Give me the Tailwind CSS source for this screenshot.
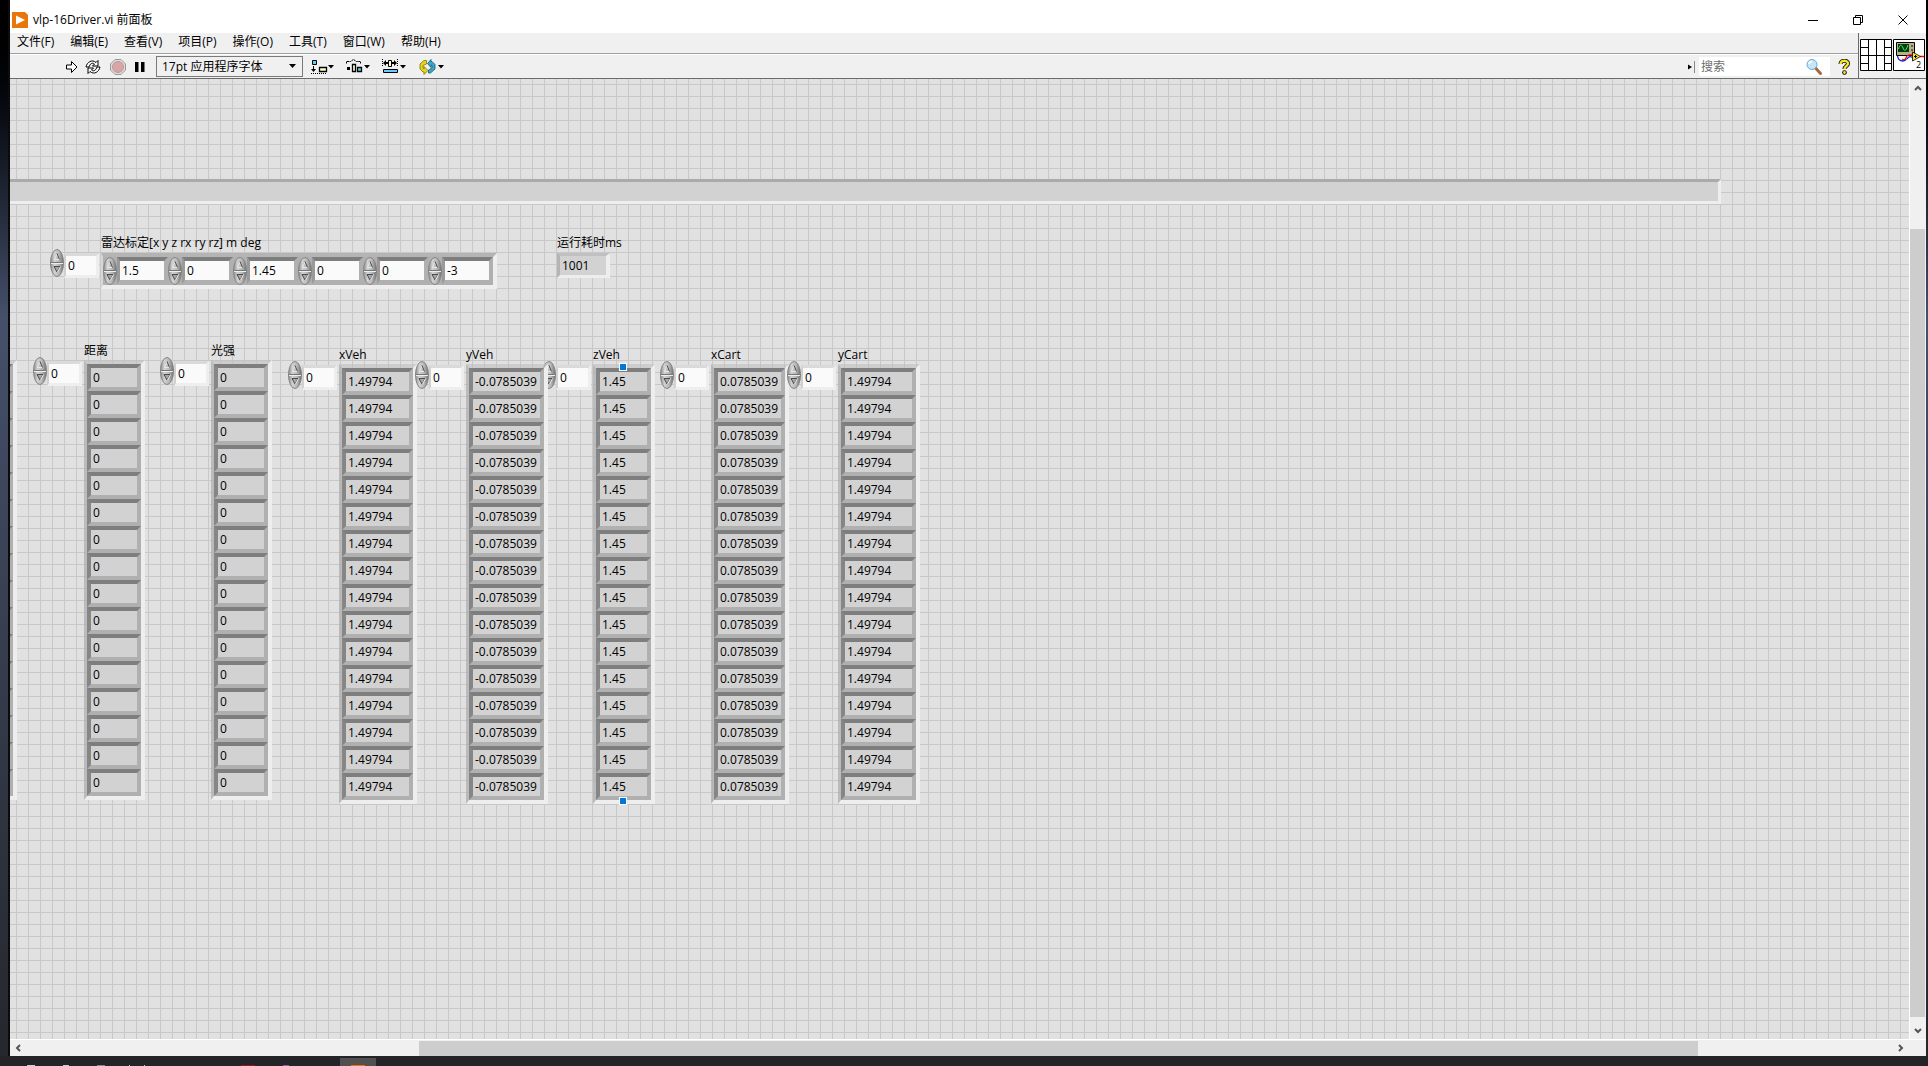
<!DOCTYPE html>
<html lang="zh-CN">
<head>
<meta charset="utf-8">
<title>vlp-16Driver.vi 前面板</title>
<script src="https://cdn.jsdelivr.net/npm/@tailwindcss/browser@4"></script>
</head>
<body class="h-screen overflow-hidden bg-[#232427] font-['Open_Sans','Noto_Sans_CJK_SC',sans-serif] text-xs leading-4 text-black">
<svg class="absolute size-0" aria-hidden="true">
  <defs>
    <linearGradient id="metal" x1="0" x2="1"><stop offset="0" stop-color="#8c8c8c"/><stop offset=".3" stop-color="#d2d2d2"/><stop offset=".65" stop-color="#b8b8b8"/><stop offset="1" stop-color="#707070"/></linearGradient>
  </defs>
</svg>
<div class="flex h-full flex-col pb-2.5">
<div class="flex min-h-0 grow bg-linear-to-b from-black via-[#45506a] via-30% to-[#25272c] pr-0.5">
<div class="flex min-w-0 grow flex-col bg-[#f0f0f0] ml-2 border-l-2 border-[#0c0c0e]">
  <header class="flex h-[33px] shrink-0 items-center bg-white pl-0.5 pt-1.5">
    <svg class="size-4" viewBox="0 0 16 16"><path d="M0 0h13l3 3v13H0z" fill="#e8760a"/><path d="M4 3.500l9 4.500-9 4.500z" fill="#fff"/></svg>
    <h1 class="ml-[5px]">vlp-16Driver.vi 前面板</h1>
    <div class="ml-auto flex items-center gap-[33px] pr-[17px]">
      <button aria-label="最小化"><svg class="size-3" viewBox="0 0 12 12"><path d="M1 6.500h10" stroke="#000"/></svg></button>
      <button aria-label="还原"><svg class="size-3" viewBox="0 0 12 12" fill="none" stroke="#000"><path d="M1.500 3.500h7v7h-7zM3.500 3.500v-2h7v7h-2"/></svg></button>
      <button aria-label="关闭"><svg class="size-3" viewBox="0 0 12 12" stroke="#000"><path d="M1.500 1.500l9 9M10.500 1.500l-9 9"/></svg></button>
    </div>
  </header>
  <div class="flex h-[46px] shrink-0 border-b border-[#6b6b6b]">
    <div class="flex min-w-0 grow flex-col">
      <nav class="flex h-[21px] shrink-0 items-center gap-4 border-b border-[#a0a0a0] pb-0.5 pl-[7px]">
        <button>文件(F)</button><button>编辑(E)</button><button>查看(V)</button><button>项目(P)</button><button>操作(O)</button><button>工具(T)</button><button>窗口(W)</button><button>帮助(H)</button>
      </nav>
      <div class="flex grow items-center border-t border-white">
        <button class="ml-[54px]" aria-label="运行"><svg class="size-4" viewBox="0 0 16 16"><path d="M2.500 6h5V2.500L13 8l-5.500 5.500V10h-5z" fill="#fff" stroke="#000"/></svg></button>
        <button class="ml-1" aria-label="连续运行"><svg class="h-4 w-[18px]" viewBox="0 0 18 16" fill="#fff" stroke="#000"><path d="M2 8C3 3 8 0 12 3.500l2-2V7H8.500l2-2C8 3 6 5 5 8z"/><path d="M16 8c-1 5-6 8-10 4.500l-2 2V9h5.500l-2 2c2.500 2 4.500 0 5.500-3z"/></svg></button>
        <button class="ml-2" aria-label="中止执行"><svg class="size-4" viewBox="0 0 16 16"><path d="M5 .5h6L15.500 5v6L11 15.500H5L.5 11V5z" fill="#ddd" stroke="#999"/><circle cx="8" cy="8" r="5.500" fill="#dba5a7" stroke="#b99"/></svg></button>
        <button class="ml-1.5" aria-label="暂停"><svg class="size-4" viewBox="0 0 16 16"><path d="M3 3h3.500v10H3zM9 3h3.500v10H9z"/></svg></button>
        <div class="relative ml-2">
          <select aria-label="字体" class="block h-[21px] w-[147px] appearance-none border border-[#7a7a7a] bg-[#f0f0f0] pl-[5px]"><option>17pt 应用程序字体</option></select>
          <svg class="pointer-events-none absolute right-[7px] top-2 h-1 w-[7px]" viewBox="0 0 7 4"><path d="M0 0h7L3.500 4z"/></svg>
        </div>
        <button class="ml-2 flex items-center" aria-label="对齐对象"><svg class="h-4 w-[23px]" viewBox="0 0 23 16"><path d="M1.500 1.500h4v4h-4z" fill="#6cf" stroke="#000"/><path d="M8.500 8.500h7v4h-7z" fill="#ffc" stroke="#000" stroke-width="1.300"/><path d="M2.500 7v4" stroke="#000"/><path d="M0 10h5l-2.500 3z"/><path d="M0 14.500h16" stroke="#000" stroke-dasharray="1 1"/><path d="M17 6h6l-3 3.500z"/></svg></button>
        <button class="ml-3" aria-label="分布对象"><svg class="h-4 w-6" viewBox="0 0 24 16"><path d="M.5 4.500v-2h4l3-2 3 2h4v2" fill="none" stroke="#000" stroke-dasharray="2 .5"/><path d="M1 8h3v3H1z"/><path d="M6.500 5.500h3v7h-3z" fill="#ffc" stroke="#000" stroke-width="1.300"/><path d="M11.500 8.500h4v4h-4z" fill="#6cf" stroke="#000" stroke-width="1.300"/><path d="M18 6h6l-3 3.500z"/></svg></button>
        <button class="ml-3" aria-label="调整对象大小"><svg class="h-4 w-6" viewBox="0 0 24 16"><path d="M.5 0v8M15.500 0v8" stroke="#000" stroke-dasharray="1 1"/><path d="M1 4l3-3v2h2v2H4v2zM15 4l-3-3v2h-2v2h2v2z"/><path d="M6.500 1.500h3v6h-3z" fill="#ffc" stroke="#000"/><path d="M1.500 10.500h14v3h-14z" fill="#6cf" stroke="#000"/><path d="M18 6h6l-3 3.500z"/></svg></button>
        <button class="ml-[13px]" aria-label="重新排序"><svg class="h-4 w-[25px]" viewBox="0 0 25 16"><path d="M7.500 1.500H5L1 5v5l3 3h1v2.500l4-4-4-4V10L4 9V6.500L7.500 5z" fill="#e2d51b" stroke="#7d7500" stroke-width=".8"/><path d="M9.500 14h2l4.500-4V5.500l-3-3h-1V.5l-3.500 4 3.500 4V6l1 .5V9l-3.500 2z" fill="#3aa9c9" stroke="#14586c" stroke-width=".8"/><path d="M19 6h6l-3 3.500z"/></svg></button>
        <svg class="ml-auto h-3 w-2" viewBox="0 0 8 12"><path d="M1 3.500L5 6 1 8.500z"/><path d="M7.500 0v12" stroke="#888"/></svg>
        <label class="ml-1 flex h-[19px] w-[131px] items-center bg-white pr-2">
          <input type="search" placeholder="搜索" aria-label="搜索" class="w-full min-w-0 pl-0.5 placeholder:text-[#6d6d6d]">
          <svg class="size-4 shrink-0" viewBox="0 0 16 16"><path d="M9.500 9l5 5.500" stroke="#a56a3c" stroke-width="3" stroke-linecap="round"/><circle cx="6" cy="5.500" r="5" fill="#c5e6fa" stroke="#6ea6d4"/><path d="M3 5a3 3 0 0 1 3-2.500" stroke="#fff" fill="none" stroke-width="1.500"/></svg>
        </label>
        <button class="ml-2 mr-2" aria-label="帮助"><svg class="h-4 w-3" viewBox="0 0 12 16" fill="none"><path d="M2.500 5c0-4.500 7.500-4 7.500-.5 0 2.500-3.500 2.500-3.500 5.500" stroke="#000" stroke-width="4"/><circle cx="6.500" cy="13.500" r="2.300" fill="#000"/><path d="M2.500 5c0-4.500 7.500-4 7.500-.5 0 2.500-3.500 2.500-3.500 5.500" stroke="#f5e52c" stroke-width="2.400"/><circle cx="6.500" cy="13.500" r="1.400" fill="#f5e52c"/></svg></button>
      </div>
    </div>
    <div class="flex items-center gap-px border-l border-[#6b6b6b] pb-0.5 pl-px pr-px">
      <svg class="size-8" viewBox="0 0 32 32" fill="#fff" stroke="#000"><path d="M.5.5h31v31H.5z"/><path d="M8.500 0v32M16.500 0v32M24.500 0v32M8 16.500h17M0 8.500h8M0 16.500h8M0 24.500h8M25 8.500h7M25 16.500h7M25 24.500h7"/></svg>
      <svg class="size-8" viewBox="0 0 32 32"><path d="M.5.5h31v31H.5z" fill="#fff" stroke="#000"/><path d="M3.500 3.500h18v13h-18z" fill="#b9b183" stroke="#000"/><path d="M5 5h11v8H5z" fill="#063a12"/><path d="M5.500 10c1.500-5 3-5 4.500-1s3 3 5-3" stroke="#3f5" fill="none"/><circle cx="19" cy="7" r="1" fill="#444"/><circle cx="19" cy="11" r="1" fill="#444"/><path d="M4.500 17c1 6 7 6 9 3" stroke="#11d" fill="none" stroke-width="1.300"/><path d="M14 20c2-3 4-3 6-1" stroke="#11d" fill="none" stroke-width="1.300"/><path d="M9 20c3 2 4-1 5-3s4-1 6-1M27 17.500h4" stroke="#e11" fill="none" stroke-width="1.300"/><path d="M19.500 13l8 4.500-8 4.500z" fill="#fde13a" stroke="#000" stroke-width=".8"/><path d="M21 17.500h3M22.500 16v3" stroke="#000"/><text x="23" y="29" font-size="9" font-family="Open Sans, sans-serif">2</text></svg>
    </div>
  </div>
  <div class="flex min-h-0 grow">
    <main id="panel" class="relative min-w-0 grow overflow-hidden bg-[#e1e1e1] bg-[linear-gradient(to_right,#c8c8c8_1px,transparent_1px),linear-gradient(to_bottom,#c8c8c8_1px,transparent_1px)] bg-size-[12px_12px] bg-position-[6px_5px]">
      <div class="absolute left-0 top-[100px] h-[25px] w-[1711px] border-y-3 border-r-3 border-t-[#aaa] border-r-[#eee] border-b-[#eee] bg-[#d2d2d2]"></div>
    </main>
    <div class="flex w-[17px] shrink-0 flex-col items-center border-l border-white">
      <button class="flex h-[17px] items-center" aria-label="向上滚动"><svg class="size-2" viewBox="0 0 8 8"><path d="M1 6l3-3 3 3" fill="none" stroke="#555" stroke-width="2"/></svg></button>
      <div class="relative w-full grow"><div class="absolute inset-x-0 bottom-0 top-[14.400%] mr-px bg-[#cdcdcd]"></div></div>
      <button class="flex h-[22px] items-center pt-1.5" aria-label="向下滚动"><svg class="size-2" viewBox="0 0 8 8"><path d="M1 2l3 3 3-3" fill="none" stroke="#555" stroke-width="2"/></svg></button>
    </div>
  </div>
  <div class="flex h-[17px] shrink-0 items-center border-t border-white pr-[17px]">
    <button class="flex w-[17px] justify-center" aria-label="向左滚动"><svg class="size-2" viewBox="0 0 8 8"><path d="M5 1L2 4l3 3" fill="none" stroke="#555" stroke-width="2"/></svg></button>
    <div class="relative h-[15px] grow"><div class="absolute inset-y-0 left-[21%] right-[10.400%] bg-[#cdcdcd]"></div></div>
    <button class="flex w-[17px] justify-center" aria-label="向右滚动"><svg class="size-2" viewBox="0 0 8 8"><path d="M2 1l3 3-3 3" fill="none" stroke="#555" stroke-width="2"/></svg></button>
  </div>
</div>
</div>
</div>
<footer class="absolute inset-x-0 bottom-0 flex h-2 items-end overflow-hidden pl-[27px]">
  <div class="h-px w-2 bg-[#ccc]"></div>
  <div class="ml-7 h-px w-1.5 bg-[#ccc]"></div>
  <div class="ml-7 h-px w-2 bg-[#888]"></div>
  <div class="ml-6 h-px w-4 border-x border-[#ccc]"></div>
  <div class="ml-24 h-px w-3.5 bg-[#8e1b22]"></div>
  <div class="ml-7 h-px w-1.5 bg-[#a050b8]"></div>
  <div class="ml-[51px] flex h-full w-9 items-end justify-center bg-[#505050]"><div class="h-px w-3.5 bg-[#e8760a]"></div></div>
</footer>

<script>
const panel = document.getElementById('panel');
const spin = `<svg class="h-7 w-3.5 shrink-0" viewBox="0 0 14 28">
  <ellipse cx="7" cy="14" rx="6.500" ry="13.500" fill="url(#metal)" stroke="#848484"/>
  <path d="M1 13.500h12" stroke="#777"/><path d="M1 14.500h12" stroke="#eee"/>
  <path d="M4.500 10.500L7 5l2.500 5.500z" fill="#c0c0c0" stroke="#f0f0f0" stroke-width=".8"/><path d="M7 4.500l2.500 6" stroke="#444" fill="none"/>
  <path d="M4 17.500h6L7 23z" fill="#a8a8a8" stroke="#4a4a4a"/><path d="M7.500 23l3-5.500" stroke="#f0f0f0" fill="none"/>
</svg>`;
const index = name => `<div class="flex items-start">${spin}<div class="mt-1 border-3 border-l-2 border-t-[#dadada] border-l-[#d0d0d0] border-r-[#eee] border-b-[#eee]"><input aria-label="${name} 索引" value="0" class="block h-[19px] w-[30px] bg-[#fafafa] pl-0.5"></div></div>`;
const cell = (w, v, name) => `<input readonly aria-label="${name}" value="${v}" style="width:${w + 8}px" class="block h-[27px] border-4 border-t-[#7e7e7e] border-l-[#868686] border-r-[#b0b0b0] border-b-[#b0b0b0] bg-[#d2d2d2] pl-0.5">`;

// Indicator arrays: [name, left of the frame, top of the frame, cell width, value, left of the index spinner]
[
  ['', -54, 281, 46, '0', null],
  ['距离', 74, 281, 46, '0', 23],
  ['光强', 201, 281, 46, '0', 150],
  ['xVeh', 329, 285, 63, '1.49794', 278],
  ['zVeh', 583, 285, 47, '1.45', 532],
  ['yVeh', 456, 285, 67, '-0.0785039', 405],
  ['xCart', 701, 285, 63, '0.0785039', 650],
  ['yCart', 828, 285, 67, '1.49794', 777],
].forEach(([name, x, y, w, v, s]) => {
  panel.insertAdjacentHTML('beforeend',
    (s === null ? '' : `<div class="absolute" style="left:${s}px;top:${y - 3}px">${index(name)}</div>`) +
    `<section class="absolute" style="left:${x}px;top:${y - 17}px">
      <h2 class="h-[17px] whitespace-nowrap">${name}</h2>
      <div class="w-fit border-y-4 border-r-4 border-l-3 border-t-[#c0c0c0]/60 border-l-[#acacac]/70 border-r-[#eee] border-b-[#eee]">${cell(w, v, name).repeat(16)}</div>
    </section>`);
});

panel.insertAdjacentHTML('beforeend', `
  <div class="absolute left-10 top-[170px]">${index('雷达标定')}</div>
  <section class="absolute left-[91px] top-[156px]">
    <h2 class="h-[18px] whitespace-nowrap">雷达标定[x y z rx ry rz] m deg</h2>
    <div class="flex w-fit border-y-4 border-r-4 border-l-2 border-t-[#b4b4b4] border-l-[#d8d8d8] border-r-[#eee] border-b-[#eee] bg-[#b0b0b0]">
      ${['1.5', '0', '1.45', '0', '0', '-3'].map(v => `<div class="flex w-[65px]">${spin}<input aria-label="雷达标定" value="${v}" class="block h-[27px] w-[51px] border-4 border-l-3 border-t-[#7e7e7e] border-l-[#9a9a9a] border-r-[#b0b0b0] border-b-[#b0b0b0] bg-[#fafafa] pl-0.5"></div>`).join('')}
    </div>
  </section>
  <section class="absolute left-[547px] top-[156px]">
    <h2 class="h-[18px] whitespace-nowrap">运行耗时ms</h2>
    <input readonly aria-label="运行耗时ms" value="1001" class="block h-[25px] w-[53px] border-3 border-r-4 border-t-[#c0c0c0] border-l-[#b4b4b4] border-r-[#eee] border-b-[#eee] bg-[#d2d2d2] pl-0.5">
  </section>
  <i class="absolute left-[609px] top-[284px] size-2 border border-white bg-[#0078d7]"></i>
  <i class="absolute left-[609px] top-[718px] size-2 border border-white bg-[#0078d7]"></i>`);
</script>
</body>
</html>
